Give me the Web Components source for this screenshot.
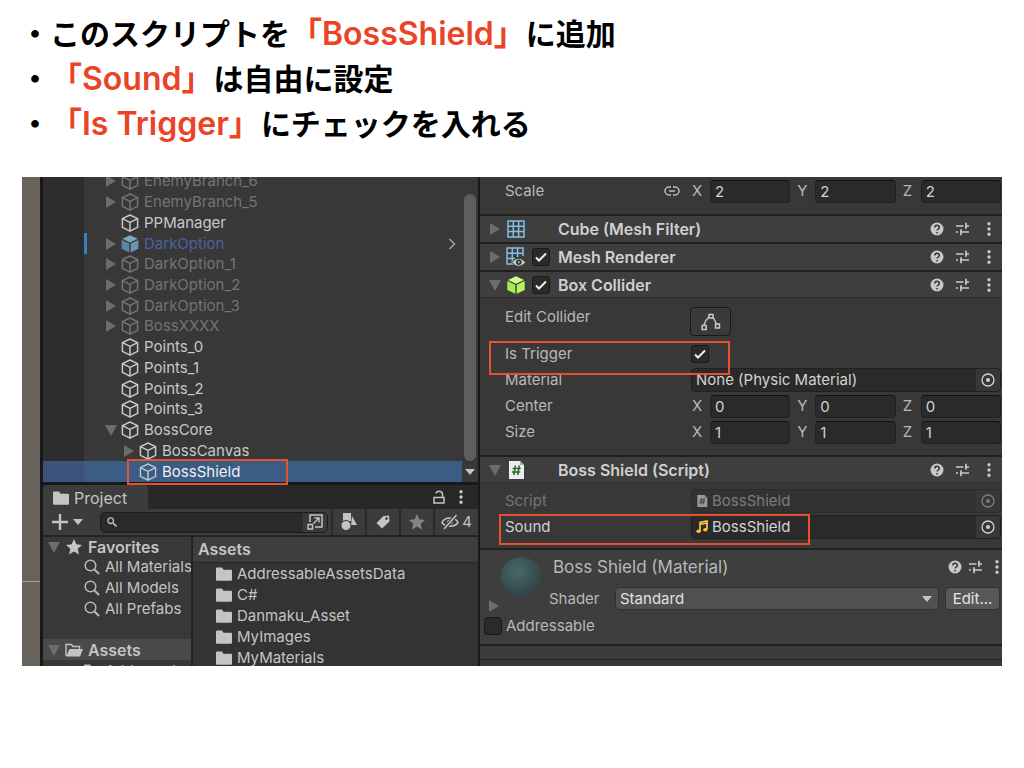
<!DOCTYPE html>
<html lang="ja">
<head>
<meta charset="utf-8">
<title>BossShield</title>
<style>
  body { margin: 0; background: #fff; font-family: Inter, "Noto Sans CJK JP", sans-serif; }
</style>
</head>
<body>
<slide-page></slide-page>
<script>
const svg = (w, h, body, extra = '') =>
  `<svg width="${w}" height="${h}" viewBox="0 0 ${w} ${h}" fill="none" aria-hidden="true" ${extra}>${body}</svg>`;

const icons = {
  right: svg(12, 14, '<path d="M1 1l10 6-10 6z" fill="#6c6c6c"/>'),
  down: svg(12, 12, '<path d="M0 1h12L6 12z" fill="#6c6c6c"/>'),
  cube: svg(18, 18, '<path d="M9 1l7.6 3.6v8.8L9 17.2l-7.600-3.800V4.600zM1.400 4.600L9 8.400l7.600-3.800M9 8.400v8.800" stroke="currentColor" stroke-width="1.500" stroke-linejoin="round"/>'),
  prefab: svg(18, 18, '<path d="M9 .3l7.800 3.500L9 7.500 1.200 3.800z" fill="#7da5bd"/><path d="M.6 5l7.700 3.600v9L.6 13.800z" fill="#5f879f"/><path d="M17.400 5L9.700 8.600v9l7.700-3.800z" fill="#6b95ad"/>'),
  collider: svg(18, 18, '<path d="M9 .2l8 3.700-8 3.800-8-3.800z" fill="#d0fd8e"/><path d="M.3 5l8 3.800v9l-8-3.900z" fill="#a9ec50"/><path d="M17.700 5l-8 3.800v9l8-3.900z" fill="#b6f55c"/>'),
  grid: svg(18, 18, '<path d="M1 1h16v16H1zM1 6.300h16M1 11.600h16M6.300 1v16M11.600 1v16" stroke="#85bfe2" stroke-width="1.500"/>'),
  gridEye: svg(20, 20, '<path d="M7 17H1V1h16v8M1 6.300h16M1 11.600h8M6.300 1v16M11.600 1v9" stroke="#85bfe2" stroke-width="1.500"/><path d="M6 15.500c3-5.500 10-5.500 13.500 0-3.500 5-10.500 5-13.500 0z" fill="#c8c8c8" stroke="#3e3e3e"/><circle cx="12.800" cy="15.300" r="2.700" fill="#333"/><circle cx="12.800" cy="15.300" r="1" fill="#c8c8c8"/>'),
  script: svg(18, 20, '<path d="M2 1h11l4 4v14H2z" fill="#eee"/><path d="M13 1l4 4h-4z" fill="#aaa"/><path d="M8.500 5.500L6.800 15M12.300 5.500L10.600 15M5.500 8.500h8.300M5 12h8.300" stroke="#356a30" stroke-width="1.600"/>'),
  help: svg(14, 14, '<circle cx="7" cy="7" r="6.500" fill="#c8c8c8"/><path d="M4.800 5.600c0-3 4.600-2.900 4.500-.2 0 1.600-2.200 1.600-2.200 3.100M7.100 9.900v1.500" stroke="#353535" stroke-width="1.500"/>'),
  sliders: svg(14, 14, '<path d="M0 4h7.500M9 4h4M10 .800v6M0 10h2M4 10h9M5 7.300v6" stroke="#c8c8c8" stroke-width="1.700"/>'),
  dots: svg(4, 14, '<path d="M2 1.700h.01M2 7h.01M2 12.300h.01" stroke="#c8c8c8" stroke-width="3.400" stroke-linecap="round"/>'),
  link: svg(16, 10, '<path d="M7 1H5a4 4 0 000 8h2M9 1h2a4 4 0 010 8H9M5 5h6" stroke="#bdbdbd" stroke-width="1.500"/>'),
  target: svg(14, 14, '<circle cx="7" cy="7" r="6" stroke="currentColor" stroke-width="1.300"/><circle cx="7" cy="7" r="2" fill="currentColor"/>'),
  edit: svg(20, 18, '<path d="M3 12C4 8 5.500 6 8 4M12 4l4 8" stroke="#c8c8c8" stroke-width="1.500"/><path d="M8 1.500h4v3.500H8zM1.200 12.500h4v4h-4zM14.500 11h4v4h-4z" stroke="#c8c8c8" stroke-width="1.500"/>'),
  note: svg(12, 14, '<path d="M4 11V2.500L11 1v8.500M4 4.500L11 3" stroke="#fbc63c" stroke-width="1.700"/><ellipse cx="2.600" cy="11.300" rx="2.200" ry="1.800" fill="#fbc63c"/><ellipse cx="9.300" cy="9.800" rx="2.200" ry="1.800" fill="#fbc63c"/>'),
  folder: svg(16, 14, '<path d="M0 1.500Q0 .5 1 .5h5l1.500 2.200H15q1 0 1 1v9q0 1-1 1H1q-1 0-1-1z" fill="#c4c4c4"/>'),
  openFolder: svg(18, 14, '<path d="M1 13V1.500h5.500L8 3.500h6.500V6" stroke="#c4c4c4" stroke-width="1.400"/><path d="M4.500 6H18l-3 7.500H1z" fill="#c4c4c4"/>'),
  magnifier: svg(16, 16, '<circle cx="6.500" cy="6.500" r="5.300" stroke="#b8b8b8" stroke-width="1.500"/><path d="M10.500 10.500l4.500 4.500" stroke="#b8b8b8" stroke-width="2"/>'),
  search: svg(10, 10, '<circle cx="3.700" cy="3.700" r="2.800" stroke="#c4c4c4" stroke-width="1.300"/><path d="M6 6l3.500 3.500" stroke="#c4c4c4" stroke-width="1.600"/>'),
  star: svg(16, 16, '<path d="M8 0l2.300 5.300 5.700.600-4.300 3.800L13 15.500l-5-3-5 3 1.300-5.800L0 5.900l5.700-.600z" fill="currentColor"/>'),
  plus: svg(16, 16, '<path d="M8 0v16M0 8h16" stroke="#c4c4c4" stroke-width="2.400"/>'),
  caret: svg(10, 6, '<path d="M0 0h10L5 6z" fill="#c4c4c4"/>'),
  lock: svg(12, 14, '<path d="M1 7.500h10V13H1zM9.500 7.500V4Q9 1.300 6 1.300 3.500 1.300 3 3.500" stroke="#c4c4c4" stroke-width="1.500"/>'),
  popOut: svg(16, 16, '<path d="M3 8V1h12v12H8" stroke="#c4c4c4" stroke-width="1.500"/><path d="M1 10.500h4.500V15H1zM6.500 9.500l5.500-5.500M7.500 4H12v4.500" stroke="#c4c4c4" stroke-width="1.400"/>'),
  shapes: svg(16, 18, '<path d="M2 0h8v8H2zM11 3l5 9h-6z" fill="#c4c4c4"/><circle cx="5" cy="12.500" r="5" fill="#c4c4c4" stroke="#3c3c3c"/>'),
  tag: svg(14, 14, '<path d="M7.500 1L13 .5 13.500 6.500 6 13.500.5 8z" fill="#c4c4c4"/><circle cx="10.500" cy="3.600" r="1.300" fill="#3c3c3c"/>'),
  hidden: svg(18, 16, '<path d="M1 8.500C4 2.500 14 2.500 17 8.500 14 13.500 4 13.500 1 8.500z" stroke="#c4c4c4" stroke-width="1.500"/><path d="M6 8c0-3.500 6-3.500 6 0s-6 3.500-6 0z" fill="#c4c4c4"/><path d="M3 15L15.500 1" stroke="#3c3c3c" stroke-width="4"/><path d="M3 15L15.500 1" stroke="#c4c4c4" stroke-width="1.500"/>'),
  chevron: svg(8, 12, '<path d="M1.500 1l5 5-5 5" stroke="#a0a0a0" stroke-width="1.600"/>')
};

const baseCss = `
  :host { display: block; box-sizing: border-box; min-width: 0; }
  * { box-sizing: border-box; }
  svg { display: block; flex: none; }
  button { display: flex; align-items: center; justify-content: center; flex: none; margin: 0; padding: 0; border: 0; background: none; color: inherit; font: inherit; }
  input, select { margin: 0; font: inherit; color: inherit; }
  ul { margin: 0; padding: 0; list-style: none; }
  .mark { position: absolute; border: 2px solid #e8512e; pointer-events: none; z-index: 2; }
  .text { display: block; min-width: 0; border: 1px solid #212121; border-top-color: #101010; border-radius: 4px; background: #2a2a2a; height: 23px; padding: 0 4px; outline: 0; }
  .check { appearance: none; flex: none; width: 18px; height: 18px; border: 1px solid #1a1a1a; border-radius: 3px; background: #2a2a2a; }
  .check:checked { background: #2a2a2a url("data:image/svg+xml,%3Csvg xmlns='http://www.w3.org/2000/svg' viewBox='0 0 16 16' fill='none'%3E%3Cpath d='M3 8.500l3 3L13 4.500' stroke='%23eeeeee' stroke-width='2'/%3E%3C/svg%3E") center / 16px 16px; }
`;

class Part extends HTMLElement {
  connectedCallback() {
    if (this.shadowRoot) return;
    const t = document.createElement('template');
    t.innerHTML = `<style>${baseCss}${this.css()}</style>${this.html()}`;
    this.attachShadow({ mode: 'open' }).append(t.content.cloneNode(true));
  }
  css() { return ''; }
  html() { return '<slot></slot>'; }
  a(name) { return this.getAttribute(name) || ''; }
}
const define = (name, cls) => customElements.define(name, cls);

/* ---- left side: hierarchy ---- */
define('tree-row', class extends Part {
  css() { return `
    :host { display: flex; align-items: stretch; position: relative; color: #c8c8c8; }
    :host([dim]) { color: #747474; }
    :host([prefab]) { color: #4a619f; }
    :host([selected]) { color: #f0f0f0; background: #3a5c85; }
    .gutter { width: 41px; flex: none; background: #2d2d2d; }
    :host([selected]) .gutter { background: #3e527f; }
    .bar { width: 3px; flex: none; margin-right: 18px; }
    :host([prefab]) .bar { background: #3a80bb; }
    .in { display: flex; align-items: center; flex: 1; }
    :host([child]) .in { padding-left: 18px; }
    .fold { width: 14px; margin-right: 2px; }
    .fold svg { margin-right: 2px; }
    :host([selected]) .in > svg { color: #bcc6d2; }
    .name { margin-left: 5px; flex: 1; }
    .next { width: 20px; }
    .mark { left: 84px; top: -2px; width: 161px; height: 26px; }`; }
  html() {
    const fold = this.a('fold');
    return `<span class="gutter"></span><span class="bar"></span><span class="in">
      ${fold ? `<button class="fold" aria-label="Toggle">${icons[fold]}</button>` : '<span class="fold"></span>'}
      ${icons[this.hasAttribute('prefab') ? 'prefab' : 'cube']}<span class="name"><slot></slot></span>
      ${this.hasAttribute('prefab') ? `<button class="next" aria-label="Open prefab">${icons.chevron}</button>` : ''}</span>
      ${this.hasAttribute('selected') ? '<span class="mark"></span>' : ''}`;
  }
});

define('hierarchy-panel', class extends Part {
  css() { return `
    :host { display: grid; grid-template-columns: minmax(0, 1fr) 16px; height: 305px; background: #383838; }
    .view { display: flex; flex-direction: column; justify-content: flex-end; min-height: 0; clip-path: inset(0 0 -4px 0); }
    .list { display: grid; grid-auto-rows: minmax(0, 1fr); height: 311px; flex: none; }
    .bar { display: flex; flex-direction: column; align-items: center; padding-top: 17px; }
    .thumb { width: 12px; flex: 1; border-radius: 6px; background: #5e5e5e; }
    .bar button { width: 16px; height: 21px; }`; }
  html() {
    const rows = [
      ['EnemyBranch_6', 'dim fold="right"'], ['EnemyBranch_5', 'dim fold="right"'], ['PPManager', ''],
      ['DarkOption', 'prefab fold="right"'], ['DarkOption_1', 'dim fold="right"'], ['DarkOption_2', 'dim fold="right"'],
      ['DarkOption_3', 'dim fold="right"'], ['BossXXXX', 'dim fold="right"'], ['Points_0', ''], ['Points_1', ''],
      ['Points_2', ''], ['Points_3', ''], ['BossCore', 'fold="down"'], ['BossCanvas', 'child fold="right"'],
      ['BossShield', 'child selected']
    ];
    return `<div class="view"><div class="list">${rows.map(([n, at]) => `<tree-row ${at}>${n}</tree-row>`).join('')}</div></div>
      <div class="bar"><span class="thumb"></span><button aria-label="Scroll down">${icons.caret}</button></div>`;
  }
});

/* ---- left side: project browser ---- */
define('project-panel', class extends Part {
  css() { return `
    :host { display: flex; flex-direction: column; flex: 1; min-height: 0; border-top: 3px solid #191919; background: #383838; }
    .tabs { display: flex; height: 24px; flex: none; background: #282828; }
    .tab { width: 105px; gap: 5px; justify-content: flex-start; padding-left: 10px; background: #3c3c3c; border-radius: 4px 4px 0 0; font-size: 16px; padding-top: 2px; }
    .tabs .lock { margin-left: auto; width: 24px; }
    .tabs .menu { width: 20px; margin-right: 7px; }
    .tools { display: flex; align-items: center; height: 28px; flex: none; background: #3c3c3c; border-bottom: 2px solid #232323; }
    .add { gap: 5px; margin: 0 17px 0 9px; }
    .find { display: flex; align-items: center; flex: 1; min-width: 0; height: 21px; padding-left: 6px; border: 1px solid #1c1c1c; border-radius: 5px; background: #2a2a2a; }
    .find input { flex: 1; min-width: 0; height: 19px; border: 0; padding: 0 4px; background: none; outline: 0; }
    .find button { width: 24px; height: 19px; background: #3a3a3a; border-radius: 0 4px 4px 0; }
    .tools .t { width: 34px; height: 26px; border-left: 2px solid #2a2a2a; }
    .find + .t { margin-left: 3px; }
    .tools .wide { width: 45px; gap: 3px; }
    .fade { color: #858585; }
    .split { display: grid; grid-template-columns: 150px minmax(0, 1fr); flex: 1; min-height: 0; }
    .tree { overflow: hidden; border-right: 2px solid #232323; }
    .row { display: flex; align-items: center; height: 21px; white-space: nowrap; color: #c4c4c4; }
    .row span { min-width: 0; overflow: hidden; }
    .tree .row { padding-left: 41px; gap: 5px; }
    .tree .head { padding-left: 5px; gap: 6px; font-weight: 600; font-size: 16px; height: 19px; }
    .tree .on { background: #4a4a4a; margin-top: 20px; height: 21px; gap: 5px; }
    .files { overflow: hidden; background: #333; }
    h2 { margin: 0; height: 26px; padding-left: 5px; font-size: 16px; line-height: 25px; font-weight: 600; background: #3e3e3e; border-bottom: 1px solid #262626; }
    .files .row { padding-left: 23px; gap: 5px; }`; }
  html() {
    const file = n => `<li class="row">${icons.folder}<span>${n}</span></li>`;
    const query = n => `<li class="row">${icons.magnifier}<span>${n}</span></li>`;
    return `<div class="tabs"><button class="tab">${icons.folder}<span>Project</span></button>
        <button class="lock" aria-label="Lock">${icons.lock}</button><button class="menu" aria-label="Menu">${icons.dots}</button></div>
      <div class="tools"><button class="add" aria-label="Create">${icons.plus}${icons.caret}</button>
        <div class="find">${icons.search}<input type="text" aria-label="Search"><button aria-label="Open search window">${icons.popOut}</button></div>
        <button class="t" aria-label="Filter by type">${icons.shapes}</button><button class="t" aria-label="Filter by label">${icons.tag}</button>
        <button class="t fade" aria-label="Save search">${icons.star}</button><button class="t wide" aria-label="4 hidden packages">${icons.hidden}<span>4</span></button></div>
      <div class="split"><ul class="tree">
          <li class="row head">${icons.down}${icons.star}<span>Favorites</span></li>
          ${query('All Materials')}${query('All Models')}${query('All Prefabs')}
          <li class="row head on">${icons.down}${icons.openFolder}<span>Assets</span></li>
          <li class="row">${icons.folder}<span>Addressab</span></li></ul>
        <div class="files"><h2>Assets</h2><ul>${['AddressableAssetsData', 'C#', 'Danmaku_Asset', 'MyImages', 'MyMaterials'].map(file).join('')}</ul></div></div>`;
  }
});

/* ---- right side: inspector ---- */
const rowCss = `
  :host { display: grid; grid-template-columns: 185px minmax(0, 1fr); align-items: center; height: 26px; padding: 0 1px 0 25px; position: relative; color: #b8b8b8; }`;

define('vector-field', class extends Part {
  css() { return rowCss + `
    .lead { display: flex; justify-content: space-between; align-items: center; padding-right: 10px; }
    .axes { display: grid; grid-template-columns: repeat(3, minmax(0, 1fr)); gap: 5px; }
    label { display: flex; align-items: center; }
    label span { width: 20px; flex: none; padding-left: 2px; }
    .text { flex: 1; color: #d2d2d2; }`; }
  html() {
    const v = this.a('values').split(' ');
    return `<span class="lead"><span>${this.a('label')}</span>${this.hasAttribute('linked') ? icons.link : ''}</span>
      <span class="axes">${['X', 'Y', 'Z'].map((k, i) => `<label><span>${k}</span><input class="text" type="text" value="${v[i]}"></label>`).join('')}</span>`;
  }
});

define('toggle-field', class extends Part {
  css() { return rowCss + `.check { margin-left: 1px; } .mark { left: 9px; top: 0; width: 241px; height: 34px; }`; }
  html() { return `<label for="c">${this.a('label')}</label><input class="check" id="c" type="checkbox" checked><span class="mark"></span>`; }
});

define('object-field', class extends Part {
  css() { return rowCss + `
    .box { display: flex; align-items: center; gap: 4px; height: 24px; margin-left: 1px; padding-left: 4px; border: 1px solid #212121; border-radius: 4px; background: #2a2a2a; color: #d2d2d2; }
    .box span { flex: 1; }
    .box svg { height: 14px; width: 12px; }
    .box button { width: 24px; height: 22px; background: #373737; border-radius: 0 3px 3px 0; }
    .box button svg { width: 14px; }
    :host([disabled]) { color: #747474; }
    :host([disabled]) .box { background: #323232; border-color: #2b2b2b; color: #7c7c7c; }
    :host([disabled]) .box > svg { opacity: .55; }
    :host([marked]) { color: #d2d2d2; }
    .mark { left: 19px; top: 0; width: 311px; height: 31px; }`; }
  html() {
    return `<span>${this.a('label')}</span><div class="box">${icons[this.a('icon')] || ''}<span>${this.a('value')}</span>
      <button aria-label="Select ${this.a('label')}">${icons.target}</button></div>${this.hasAttribute('marked') ? '<span class="mark"></span>' : ''}`;
  }
});

define('component-header', class extends Part {
  css() { return `
    :host { display: grid; grid-template-columns: 27px 25px 26px minmax(0, 1fr) auto; align-items: center; height: 28px; background: #3e3e3e; border-top: 2px solid #202020; }
    :host([open]) { border-bottom: 1px solid #2f2f2f; }
    .fold { padding-left: 2px; }
    h3 { margin: 0; font-size: 16px; font-weight: 600; color: #d0d0d0; }
    .tools { display: flex; }
    .tools button { width: 26px; }
    .icon { width: 18px; display: flex; justify-content: center; }`; }
  html() {
    return `<button class="fold" aria-label="Toggle">${icons[this.hasAttribute('open') ? 'down' : 'right']}</button>
      <span class="icon">${icons[this.a('icon')]}</span>
      ${this.hasAttribute('toggle') ? `<input class="check" type="checkbox" checked aria-label="${this.a('label')}">` : '<span></span>'}
      <h3>${this.a('label')}</h3>
      <span class="tools"><button aria-label="Help">${icons.help}</button><button aria-label="Presets">${icons.sliders}</button><button aria-label="Menu">${icons.dots}</button></span>`;
  }
});

define('edit-collider', class extends Part {
  css() { return rowCss + `
    :host { height: 34px; align-items: start; }
    button { width: 41px; height: 29px; border: 1px solid #191919; border-radius: 4px; background: #3a3a3a; }`; }
  html() { return `<span>Edit Collider</span><button aria-label="Edit Collider">${icons.edit}</button>`; }
});

define('material-block', class extends Part {
  css() { return `
    :host { border-top: 2px solid #212121; background: #3e3e3e; height: 96px; color: #b8b8b8; }
    .top { display: grid; grid-template-columns: 61px minmax(0, 1fr); height: 66px; }
    .left { display: flex; flex-direction: column; padding-left: 8px; }
    .ball { width: 40px; height: 40px; margin: 7px 0 2px 13px; border-radius: 50%; background: radial-gradient(circle at 42% 35%, #49686b, #35484b 65%, #333a3c 90%); }
    .left button { width: 12px; height: 14px; }
    .title { display: flex; align-items: center; height: 33px; padding-left: 12px; margin-right: -5px; font-size: 17px; }
    .title span { flex: 1; }
    .title button { width: 21px; }
    .shader { display: grid; grid-template-columns: 66px minmax(0, 1fr) 55px; align-items: center; padding: 4px 2px 0 8px; }
    select { appearance: none; height: 23px; margin-right: 6px; padding: 0 4px; border: 1px solid #303030; border-radius: 4px; color: #e0e0e0; background: #505050 url("data:image/svg+xml,%3Csvg xmlns='http://www.w3.org/2000/svg' viewBox='0 0 10 6'%3E%3Cpath d='M0 0h10L5 6z' fill='%23c4c4c4'/%3E%3C/svg%3E") no-repeat right 6px center / 10px 6px; }
    .shader button { height: 23px; border: 1px solid #303030; border-radius: 4px; background: #585858; color: #e4e4e4; }
    .addr { display: flex; align-items: center; gap: 4px; height: 20px; padding-left: 4px; }`; }
  html() {
    return `<div class="top"><div class="left"><span class="ball"></span><button aria-label="Toggle">${icons.right}</button></div>
      <div><div class="title"><span>Boss Shield (Material)</span><button aria-label="Help">${icons.help}</button><button aria-label="Presets">${icons.sliders}</button><button aria-label="Menu">${icons.dots}</button></div>
      <div class="shader"><label for="s">Shader</label><select id="s"><option>Standard</option></select><button>Edit...</button></div></div></div>
      <label class="addr"><input class="check" type="checkbox">Addressable</label>`;
  }
});

define('inspector-panel', class extends Part {
  css() { return `
    :host { background: #383838; overflow: hidden; }
    .transform { padding: 1px 0 10px; }
    .collider { padding: 9px 0 10px; }
    .script { padding: 5px 0 8px; }
    .foot { height: 16px; border-top: 2px solid #212121; border-bottom: 1px solid #212121; background: #3c3c3c; }`; }
  html() {
    return `<div class="transform"><vector-field label="Scale" values="2 2 2" linked></vector-field></div>
      <component-header label="Cube (Mesh Filter)" icon="grid"></component-header>
      <component-header label="Mesh Renderer" icon="gridEye" toggle></component-header>
      <component-header label="Box Collider" icon="collider" toggle open></component-header>
      <div class="collider"><edit-collider></edit-collider><toggle-field label="Is Trigger"></toggle-field>
        <object-field label="Material" value="None (Physic Material)"></object-field>
        <vector-field label="Center" values="0 0 0"></vector-field><vector-field label="Size" values="1 1 1"></vector-field></div>
      <component-header label="Boss Shield (Script)" icon="script" open></component-header>
      <div class="script"><object-field label="Script" value="BossShield" icon="script" disabled></object-field>
        <object-field label="Sound" value="BossShield" icon="note" marked></object-field></div>
      <material-block></material-block><div class="foot"></div>`;
  }
});

/* ---- page ---- */
define('editor-window', class extends Part {
  css() { return `
    :host { display: grid; grid-template-columns: 18px minmax(0, 440fr) minmax(0, 522fr); height: 489px; overflow: hidden; background: #383838; font-size: 15px; line-height: 20px; color: #c4c4c4; }
    .scene { background: linear-gradient(#a5a29b, #a5a29b) 0 404px / 100% 1px no-repeat #67625b; }
    .left { display: flex; flex-direction: column; min-height: 0; border-left: 3px solid #191919; border-right: 2px solid #191919; }`; }
  html() { return `<div class="scene"></div><div class="left"><hierarchy-panel></hierarchy-panel><project-panel></project-panel></div><inspector-panel></inspector-panel>`; }
});

define('note-list', class extends Part {
  css() { return `
    :host { font-weight: 600; font-size: 30px; line-height: 45px; color: #000; }
    li { display: flex; white-space: pre; height: 45px; }
    .dot { width: 30px; flex: none; }
    em { font-style: normal; font-size: 32px; line-height: 1; color: #ea4326; }`; }
  html() {
    return `<ul><li><span class="dot">・</span><span>このスクリプトを<em>「BossShield」</em>に追加</span></li>
      <li><span class="dot">・</span><span><em>「Sound」</em>は自由に設定</span></li>
      <li><span class="dot">・</span><span><em>「Is Trigger」</em>にチェックを入れる</span></li></ul>`;
  }
});

define('slide-page', class extends Part {
  css() { return `
    :host { padding: 12px 22px 0; }
    note-list { margin: 0 0 30px -2px; }`; }
  html() { return `<note-list></note-list><editor-window></editor-window>`; }
});
</script>
</body>
</html>
